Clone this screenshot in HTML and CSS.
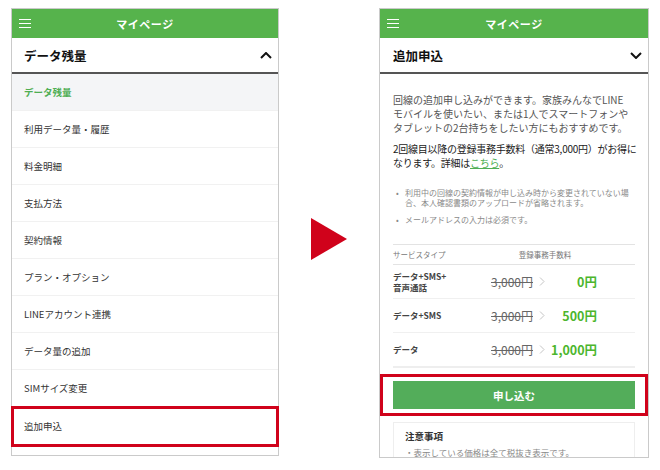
FILE: index.html
```html
<!DOCTYPE html>
<html lang="ja">
<head>
  <meta charset="UTF-8">
  <title>マイページ - 追加申込</title>
  <link rel="stylesheet" href="styles.css">
</head>

<body>
  <div class="stage">

    <!-- Left: menu -->
    <div class="phone phone-menu">
      <div class="topbar">
        <svg class="burger" width="12" height="9" viewBox="0 0 12 9"><path d="M0 .5h12M0 4.5h12M0 8.5h12" stroke="#fff" stroke-width="1"/></svg>
        <span class="topbar-title">マイページ</span>
      </div>
      <div class="section-head">
        <span>データ残量</span>
        <svg class="chevron" width="12" height="7" viewBox="0 0 12 7"><path d="M1 6l5-5 5 5" fill="none" stroke="#111" stroke-width="2"/></svg>
      </div>
      <ul class="menu">
        <li class="menu-item is-active">データ残量</li>
        <li class="menu-item">利用データ量・履歴</li>
        <li class="menu-item">料金明細</li>
        <li class="menu-item">支払方法</li>
        <li class="menu-item">契約情報</li>
        <li class="menu-item">プラン・オプション</li>
        <li class="menu-item">LINEアカウント連携</li>
        <li class="menu-item">データ量の追加</li>
        <li class="menu-item">SIMサイズ変更</li>
        <li class="menu-item is-marked">追加申込</li>
      </ul>
    </div>

    <!-- Arrow -->
    <div class="arrow-col">
      <div class="arrow"></div>
    </div>

    <!-- Right: apply page -->
    <div class="phone phone-apply">
      <div class="topbar">
        <svg class="burger" width="12" height="9" viewBox="0 0 12 9"><path d="M0 .5h12M0 4.5h12M0 8.5h12" stroke="#fff" stroke-width="1"/></svg>
        <span class="topbar-title">マイページ</span>
      </div>
      <div class="section-head">
        <span>追加申込</span>
        <svg class="chevron" width="12" height="7" viewBox="0 0 12 7"><path d="M1 1l5 5 5-5" fill="none" stroke="#111" stroke-width="2"/></svg>
      </div>

      <div class="content">
        <p class="intro">回線の追加申し込みができます。家族みんなでLINE<br>モバイルを使いたい、または1人でスマートフォンや<br>タブレットの2台持ちをしたい方にもおすすめです。</p>
        <p class="intro intro-strong">2回線目以降の登録事務手数料（通常3,000円）がお得に<br>なります。詳細は<a href="#" class="link">こちら</a>。</p>

        <ul class="notes-list">
          <li><span class="dot">•</span><span>利用中の回線の契約情報が申し込み時から変更されていない場<br>合、本人確認書類のアップロードが省略されます。</span></li>
          <li><span class="dot">•</span><span>メールアドレスの入力は必須です。</span></li>
        </ul>

        <div class="fee-table">
          <div class="fee-row fee-head">
            <span>サービスタイプ</span>
            <span class="fee-head-price">登録事務手数料</span>
          </div>
          <div class="fee-row">
            <span class="fee-type">データ+SMS+<br>音声通話</span>
            <span class="fee-old">3,000円</span>
            <svg class="fee-arrow" width="6" height="9" viewBox="0 0 6 9"><path d="M1 .5l4 4-4 4" fill="none" stroke="#c4c4c4" stroke-width="1"/></svg>
            <span class="fee-new">0円</span>
          </div>
          <div class="fee-row">
            <span class="fee-type">データ+SMS</span>
            <span class="fee-old">3,000円</span>
            <svg class="fee-arrow" width="6" height="9" viewBox="0 0 6 9"><path d="M1 .5l4 4-4 4" fill="none" stroke="#c4c4c4" stroke-width="1"/></svg>
            <span class="fee-new">500円</span>
          </div>
          <div class="fee-row">
            <span class="fee-type">データ</span>
            <span class="fee-old">3,000円</span>
            <svg class="fee-arrow" width="6" height="9" viewBox="0 0 6 9"><path d="M1 .5l4 4-4 4" fill="none" stroke="#c4c4c4" stroke-width="1"/></svg>
            <span class="fee-new">1,000円</span>
          </div>
        </div>
      </div>

      <div class="apply-wrap">
        <a href="#" class="apply-btn">申し込む</a>
      </div>

      <div class="caution">
        <div class="caution-title">注意事項</div>
        <div class="caution-text">・表示している価格は全て税抜き表示です。</div>
      </div>
    </div>

  </div>
</body>
</html>
```

FILE: styles.css
```css
/* ===============================
   BASE
=============================== */
html, body {
  margin: 0;
  padding: 0;
  background: #fff;
}
body {
  font-family: "Noto Sans CJK JP", "Noto Sans", sans-serif;
  color: #333;
}
ul, p {
  margin: 0;
  padding: 0;
}

.stage {
  display: flex;
  align-items: flex-start;
  padding: 8px 0 0 11px;
}

/* ===============================
   PHONE FRAME
=============================== */
.phone {
  box-sizing: border-box;
  border: 1px solid #cacaca;
  background: #fff;
}
.phone-menu {
  width: 268px;
  height: 448px;
}
.phone-apply {
  width: 270px;
  height: 450px;
  overflow: hidden;
}

.topbar {
  display: grid;
  grid-template-columns: 1fr auto 1fr;
  align-items: center;
  height: 29px;
  background: #56b34c;
}
.burger {
  display: block;
  margin-left: 7px;
}
.topbar-title {
  color: #fff;
  font-size: 11px;
  font-weight: bold;
  letter-spacing: 0.5px;
}

.section-head {
  display: flex;
  justify-content: space-between;
  align-items: center;
  height: 34px;
  padding: 0 6px 0 12px;
  border-bottom: 2px solid #555;
  font-size: 12.5px;
  font-weight: bold;
  color: #111;
}
.phone-apply .section-head {
  padding-left: 13px;
}

/* ===============================
   MENU
=============================== */
.menu {
  list-style: none;
}
.menu-item {
  display: flex;
  align-items: center;
  height: 36px;
  padding-left: 12px;
  border-bottom: 1px solid #f1f1f1;
  font-size: 9.5px;
  color: #333;
}
.menu-item.is-active {
  background: #f4f5f7;
  color: #4fae54;
  font-weight: bold;
}
.menu-item.is-marked {
  height: 38px;
  outline: 3px solid #d0021b;
  outline-offset: -2px;
}

/* Red arrow */
.arrow-col {
  width: 100px;
  display: flex;
  justify-content: center;
  padding-top: 210px;
}
.arrow {
  width: 0;
  height: 0;
  border-left: 36px solid #d0021b;
  border-top: 21.5px solid transparent;
  border-bottom: 21.5px solid transparent;
}

/* ===============================
   APPLY CONTENT
=============================== */
.content {
  padding: 19px 13px 0;
}
.intro {
  font-size: 10px;
  line-height: 14px;
  color: #555;
  white-space: nowrap;
}
.intro-strong {
  margin-top: 7px;
  color: #222;
  letter-spacing: -0.25px;
}
.link {
  color: #4fae54;
  text-decoration: underline;
}

.notes-list {
  list-style: none;
  margin-top: 18px;
  font-size: 8px;
  line-height: 10px;
  color: #8a8a8a;
  white-space: nowrap;
}
.notes-list li {
  display: flex;
}
.notes-list li + li {
  margin-top: 7px;
}
.dot {
  width: 12px;
  padding-left: 3px;
  box-sizing: border-box;
}

/* Fee table */
.fee-table {
  margin-top: 19px;
  border-top: 1px solid #e3e3e3;
  border-bottom: 2px solid #eee;
}
.fee-row {
  display: grid;
  grid-template-columns: 90px 50px 18px 46px;
  align-items: center;
  height: 33px;
  border-bottom: 1px solid #f0f0f0;
  white-space: nowrap;
}
.fee-row:last-child {
  border-bottom: 0;
}
.fee-head {
  height: 19px;
  border-bottom: 1px solid #e3e3e3;
  font-size: 7.5px;
  color: #777;
}
.fee-head-price {
  grid-column: 2 / 5;
  text-align: center;
  padding-left: 10px;
}
.fee-type {
  font-size: 8.5px;
  line-height: 11px;
  font-weight: bold;
  color: #444;
}
.fee-old {
  text-align: right;
  font-size: 12px;
  color: #666;
  text-decoration: line-through;
}
.fee-arrow {
  justify-self: center;
}
.fee-new {
  text-align: right;
  font-size: 12.5px;
  font-weight: bold;
  color: #4cb62d;
}

/* Apply button */
.apply-wrap {
  margin-top: 6px;
  padding: 7px 13px;
  outline: 3px solid #d0021b;
  outline-offset: -3px;
}
.apply-btn {
  display: flex;
  justify-content: center;
  align-items: center;
  height: 28px;
  background: #53ad5a;
  color: #fff;
  font-size: 10.5px;
  font-weight: bold;
  text-decoration: none;
}

/* Caution */
.caution {
  margin: 6px 13px 0;
  padding: 6px 11px;
  border: 1px solid #eee;
}
.caution-title {
  font-size: 9.5px;
  font-weight: bold;
  color: #333;
}
.caution-text {
  margin-top: 3px;
  font-size: 8.5px;
  color: #888;
}
```
